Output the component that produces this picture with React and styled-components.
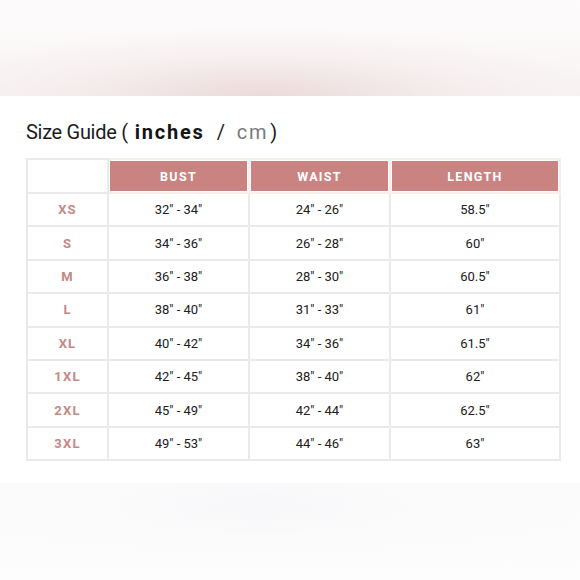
import React from "react";
import styled, { createGlobalStyle } from "styled-components";

const GlobalStyle = createGlobalStyle`
  html, body {
    margin: 0;
    padding: 0;
    background: #ffffff;
    font-family: Roboto, "Liberation Sans", sans-serif;
  }
`;

const Page = styled.div`
  width: 580px;
  height: 580px;
  display: flex;
  flex-direction: column;
  overflow: hidden;
  background: #fff;
`;

const TopBlur = styled.div`
  height: 96px;
  background:
    radial-gradient(ellipse 60% 70% at 45% 100%, rgba(232, 210, 210, 0.75), rgba(240, 226, 226, 0.3) 60%, rgba(255, 255, 255, 0) 100%),
    linear-gradient(180deg, #fdfcfc 0%, #f8f3f3 100%);
`;

const Content = styled.div`
  padding: 22px 21px 0 26px;
  height: 365px;
`;

const Title = styled.h2`
  margin: 0;
  font-size: 20px;
  font-weight: 400;
  color: #1c1c1c;
  line-height: 28px;
  letter-spacing: -0.3px;
`;

const Unit = styled.span`
  font-weight: ${(p) => (p.$active ? 700 : 400)};
  color: ${(p) => (p.$active ? "#151515" : "#7a7a7a")};
  letter-spacing: 1.8px;
  margin: ${(p) => (p.$active ? "0 12px 0 7px" : "0 2px 0 12px")};
`;

const Slash = styled.span`
  color: #222;
`;

const Table = styled.table`
  margin-top: 12px;
  width: 533px;
  border-collapse: collapse;
  table-layout: fixed;
`;

const Th = styled.th`
  height: 32px;
  padding: 0;
  border: 2px solid ${(p) => (p.$blank ? "#ebe9e9" : "#f7eeee")};
  background: ${(p) => (p.$blank ? "#fff" : "#c98482")};
  box-shadow: ${(p) => (p.$blank ? "none" : "inset 0 0 0 1px #fff")};
  color: #fff;
  font-size: 12.5px;
  font-weight: 700;
  letter-spacing: 1.3px;
  text-align: center;
`;

const Size = styled.td`
  height: 31.4px;
  padding: 0;
  border: 2px solid #ebeaea;
  text-align: center;
  color: #c58886;
  font-size: 13px;
  font-weight: 700;
  letter-spacing: 1.2px;
`;

const Cell = styled.td`
  height: 31.4px;
  padding: 0;
  border: 2px solid #ebeaea;
  text-align: center;
  color: #202020;
  font-size: 13px;
`;

const BottomFade = styled.div`
  flex: 1;
  background:
    radial-gradient(ellipse 55% 60% at 45% 25%, rgba(246, 246, 248, 0.8), rgba(250, 250, 251, 0.5) 60%, rgba(255, 255, 255, 0) 100%),
    linear-gradient(180deg, #fcfbfc 0%, #fdfdfd 100%);
`;

const rows = [
  ["XS", '32" - 34"', '24" - 26"', '58.5"'],
  ["S", '34" - 36"', '26" - 28"', '60"'],
  ["M", '36" - 38"', '28" - 30"', '60.5"'],
  ["L", '38" - 40"', '31" - 33"', '61"'],
  ["XL", '40" - 42"', '34" - 36"', '61.5"'],
  ["1XL", '42" - 45"', '38" - 40"', '62"'],
  ["2XL", '45" - 49"', '42" - 44"', '62.5"'],
  ["3XL", '49" - 53"', '44" - 46"', '63"'],
];

export default function App() {
  return (
    <Page>
      <GlobalStyle />
      <TopBlur />
      <Content>
        <Title>
          Size Guide (<Unit $active>inches</Unit>
          <Slash>/</Slash>
          <Unit>cm</Unit>)
        </Title>
        <Table>
          <colgroup>
            <col style={{ width: 81 }} />
            <col style={{ width: 141 }} />
            <col style={{ width: 141 }} />
            <col style={{ width: 170 }} />
          </colgroup>
          <thead>
            <tr>
              <Th $blank />
              <Th>BUST</Th>
              <Th>WAIST</Th>
              <Th>LENGTH</Th>
            </tr>
          </thead>
          <tbody>
            {rows.map(([size, bust, waist, length]) => (
              <tr key={size}>
                <Size>{size}</Size>
                <Cell>{bust}</Cell>
                <Cell>{waist}</Cell>
                <Cell>{length}</Cell>
              </tr>
            ))}
          </tbody>
        </Table>
      </Content>
      <BottomFade />
    </Page>
  );
}
